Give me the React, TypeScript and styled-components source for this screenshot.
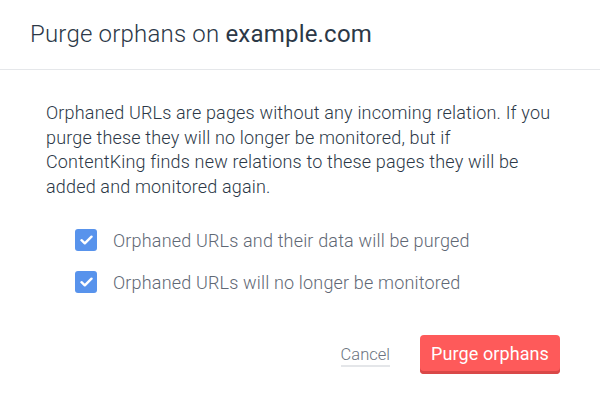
import React from "react";
import styled, { createGlobalStyle } from "styled-components";

const Global = createGlobalStyle`
  html, body { margin: 0; padding: 0; background: #ffffff; }
  body { font-family: Roboto, "Noto Sans", sans-serif; -webkit-font-smoothing: antialiased; }
  * { box-sizing: border-box; }
`;

const Modal = styled.div`
  width: 600px;
  height: 414px;
  background: #ffffff;
  display: flex;
  flex-direction: column;
`;

const Header = styled.div`
  height: 70px;
  padding: 0 30px;
  display: flex;
  align-items: center;
  border-bottom: 1px solid #e5e7ea;
`;

const Title = styled.h1`
  margin: 0;
  font-size: 24px;
  font-weight: 300;
  color: #2c3847;
  letter-spacing: 0.2px;
  padding-bottom: 1px;
`;

const Domain = styled.span`
  font-weight: 400;
`;

const Body = styled.div`
  padding: 31px 46px 0 46px;
  display: flex;
  flex-direction: column;
`;

const Paragraph = styled.p`
  margin: 0;
  font-size: 18px;
  font-weight: 300;
  line-height: 24.5px;
  color: #2c3847;
  letter-spacing: 0.17px;
`;

const Checks = styled.div`
  margin-top: 30px;
  padding-left: 29px;
  display: flex;
  flex-direction: column;
  gap: 20px;
`;

const CheckRow = styled.label`
  display: flex;
  align-items: center;
  gap: 16px;
  height: 22px;
`;

const Box = styled.span`
  width: 22px;
  height: 22px;
  border-radius: 3px;
  background: #5893ec;
  display: flex;
  align-items: center;
  justify-content: center;
  flex-shrink: 0;
`;

const CheckLabel = styled.span`
  font-size: 18px;
  font-weight: 300;
  color: #5f6875;
  letter-spacing: 0.17px;
`;

const Footer = styled.div`
  margin-top: 42px;
  padding-right: 40px;
  display: flex;
  justify-content: flex-end;
  align-items: center;
  gap: 30px;
`;

const Cancel = styled.button`
  background: none;
  border: none;
  padding: 0 0 1px 0;
  font-family: inherit;
  font-size: 16.5px;
  font-weight: 300;
  color: #6b7380;
  border-bottom: 2px solid #e4e6e9;
  line-height: 18px;
  margin-top: 4px;
  cursor: pointer;
`;

const Primary = styled.button`
  width: 140px;
  height: 39px;
  border: none;
  border-radius: 4px;
  background: #fe5a5a;
  box-shadow: inset 0 -3px 0 #d94848;
  color: #ffffff;
  font-family: inherit;
  font-size: 18px;
  font-weight: 400;
  padding: 0 0 3px 0;
  cursor: pointer;
  letter-spacing: 0.1px;
`;

const Check = () => (
  <svg width="13" height="10" viewBox="0 0 13 10">
    <path d="M1.5 5.2 L4.8 8.3 L11.5 1.7" fill="none" stroke="#ffffff" strokeWidth="2.4" strokeLinecap="round" strokeLinejoin="round" />
  </svg>
);

export default function App() {
  return (
    <>
      <Global />
      <Modal>
        <Header>
          <Title>
            Purge orphans on <Domain>example.com</Domain>
          </Title>
        </Header>
        <Body>
          <Paragraph>
            Orphaned URLs are pages without any incoming relation. If you purge these they will no longer be monitored, but if ContentKing finds new relations to these pages they will be added and monitored again.
          </Paragraph>
          <Checks>
            <CheckRow>
              <Box><Check /></Box>
              <CheckLabel>Orphaned URLs and their data will be purged</CheckLabel>
            </CheckRow>
            <CheckRow>
              <Box><Check /></Box>
              <CheckLabel>Orphaned URLs will no longer be monitored</CheckLabel>
            </CheckRow>
          </Checks>
        </Body>
        <Footer>
          <Cancel>Cancel</Cancel>
          <Primary>Purge orphans</Primary>
        </Footer>
      </Modal>
    </>
  );
}
